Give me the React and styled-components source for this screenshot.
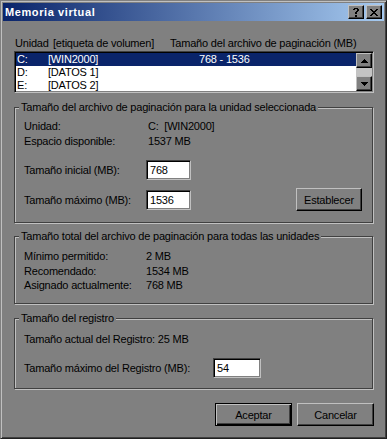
import React from 'react';
import styled, { createGlobalStyle } from 'styled-components';

const GlobalStyle = createGlobalStyle`
  html, body {
    margin: 0;
    padding: 0;
    background: #808080;
  }
  body {
    font-family: 'Liberation Sans', Arial, sans-serif;
    font-size: 11px;
    letter-spacing: -0.2px;
    color: #000000;
  }
`;

const drives = [
  { letter: 'C:', label: '[WIN2000]', size: '768 - 1536', selected: true },
  { letter: 'D:', label: '[DATOS 1]', size: '' },
  { letter: 'E:', label: '[DATOS 2]', size: '' },
];

const totals = [
  { label: 'Mínimo permitido:', value: '2 MB' },
  { label: 'Recomendado:', value: '1534 MB' },
  { label: 'Asignado actualmente:', value: '768 MB' },
];

const helpGlyph = [
  '.XXXX.',
  'XX..XX',
  '....XX',
  '...XX.',
  '..XX..',
  '..XX..',
  '......',
  '..XX..',
  '..XX..',
];

const closeGlyph = [
  'XX....XX',
  '.XX..XX.',
  '..XXXX..',
  '...XX...',
  '..XXXX..',
  '.XX..XX.',
  'XX....XX',
];

const upGlyph = ['...X...', '..XXX..', '.XXXXX.', 'XXXXXXX'];
const downGlyph = ['XXXXXXX', '.XXXXX.', '..XXX..', '...X...'];

const PixelGlyph = ({ rows }) => (
  <svg
    width={rows[0].length}
    height={rows.length}
    viewBox={`0 0 ${rows[0].length} ${rows.length}`}
    shapeRendering="crispEdges"
  >
    {rows.map((row, y) =>
      row.split('').map((c, x) =>
        c === 'X' ? <rect key={`${x}-${y}`} x={x} y={y} width="1" height="1" fill="#000" /> : null
      )
    )}
  </svg>
);

const App = () => {
  return (
    <>
      <GlobalStyle />
      <Window>
        <TitleBar>
          <TitleText>Memoria virtual</TitleText>
          <CaptionButtons>
            <CaptionButton aria-label="Ayuda">
              <PixelGlyph rows={helpGlyph} />
            </CaptionButton>
            <CaptionButton aria-label="Cerrar">
              <PixelGlyph rows={closeGlyph} />
            </CaptionButton>
          </CaptionButtons>
        </TitleBar>

        <Body>
          <ColumnHeader>
            <Col width={38}>Unidad</Col>
            <Col width={117}>[etiqueta de volumen]</Col>
            <Col>Tamaño del archivo de paginación (MB)</Col>
          </ColumnHeader>

          <ListBox>
            <ListRows>
              {drives.map(d => (
                <ListRow key={d.letter} selected={d.selected}>
                  <Cell width={31}>{d.letter}</Cell>
                  <Cell width={151}>{d.label}</Cell>
                  <Cell>{d.size}</Cell>
                </ListRow>
              ))}
            </ListRows>
            <ScrollBar>
              <ScrollButton>
                <PixelGlyph rows={upGlyph} />
              </ScrollButton>
              <ScrollTrack />
              <ScrollButton>
                <PixelGlyph rows={downGlyph} />
              </ScrollButton>
            </ScrollBar>
          </ListBox>

          <GroupBox top={8}>
            <GroupTitle>Tamaño del archivo de paginación para la unidad seleccionada</GroupTitle>
            <GroupContent pt={5} pb={11}>
              <InfoRow>
                <InfoLabel width={124}>Unidad:</InfoLabel>
                <InfoValue>C:  [WIN2000]</InfoValue>
              </InfoRow>
              <InfoRow>
                <InfoLabel width={124}>Espacio disponible:</InfoLabel>
                <InfoValue>1537 MB</InfoValue>
              </InfoRow>
              <FieldRow gap={12}>
                <FieldLabel width={122}>Tamaño inicial (MB):</FieldLabel>
                <TextInput width={45} defaultValue="768" />
              </FieldRow>
              <FieldRow gap={8}>
                <FieldLabel width={122}>Tamaño máximo (MB):</FieldLabel>
                <TextInput width={45} defaultValue="1536" />
                <PushButton width={66} push>Establecer</PushButton>
              </FieldRow>
            </GroupContent>
          </GroupBox>

          <GroupBox top={7}>
            <GroupTitle>Tamaño total del archivo de paginación para todas las unidades</GroupTitle>
            <GroupContent pt={6} pb={10}>
              {totals.map(t => (
                <InfoRow key={t.label}>
                  <InfoLabel width={122}>{t.label}</InfoLabel>
                  <InfoValue>{t.value}</InfoValue>
                </InfoRow>
              ))}
            </GroupContent>
          </GroupBox>

          <GroupBox top={8}>
            <GroupTitle>Tamaño del registro</GroupTitle>
            <GroupContent pt={7} pb={10}>
              <InfoRow>
                <InfoLabel>Tamaño actual del Registro: 25 MB</InfoLabel>
              </InfoRow>
              <FieldRow gap={12}>
                <FieldLabel width={189}>Tamaño máximo del Registro (MB):</FieldLabel>
                <TextInput width={48} defaultValue="54" />
              </FieldRow>
            </GroupContent>
          </GroupBox>

          <ButtonRow>
            <PushButton width={77} isDefault>Aceptar</PushButton>
            <PushButton width={77}>Cancelar</PushButton>
          </ButtonRow>
        </Body>
      </Window>
    </>
  );
};

const Window = styled.div`
  width: 387px;
  height: 439px;
  box-sizing: border-box;
  display: flex;
  flex-direction: column;
  padding: 2px;
  background: #808080;
  border: 1px solid;
  border-color: #808080 #202020 #202020 #808080;
  box-shadow: inset 1px 1px 0 #c0c0c0, inset -1px -1px 0 #404040;
`;

const TitleBar = styled.div`
  height: 18px;
  display: flex;
  align-items: center;
  padding: 0 2px;
  background: linear-gradient(90deg, #0a246a 0%, #a6caf0 100%);
`;

const TitleText = styled.span`
  color: #ffffff;
  font-weight: bold;
  font-size: 11px;
  letter-spacing: 0.6px;
`;

const CaptionButtons = styled.div`
  margin-left: auto;
  display: flex;
  gap: 2px;
`;

const CaptionButton = styled.div`
  width: 16px;
  height: 14px;
  box-sizing: border-box;
  display: flex;
  align-items: center;
  justify-content: center;
  background: #808080;
  border: 1px solid;
  border-color: #c0c0c0 #000000 #000000 #c0c0c0;
  box-shadow: inset -1px -1px 0 #404040;
`;

const Body = styled.div`
  flex: 1;
  display: flex;
  flex-direction: column;
  padding: 16px 10px 0 11px;
`;

const ColumnHeader = styled.div`
  display: flex;
  padding-left: 1px;
  line-height: 13px;
  height: 13px;
  margin-bottom: 1px;
  white-space: nowrap;
`;

const Col = styled.span`
  flex: ${p => (p.width ? `0 0 ${p.width}px` : '1')};
`;

const ListBox = styled.div`
  height: 42px;
  box-sizing: border-box;
  display: flex;
  padding: 1px;
  background: #ffffff;
  border: 1px solid;
  border-color: #404040 #c0c0c0 #c0c0c0 #404040;
  box-shadow: inset 1px 1px 0 #000000, inset -1px -1px 0 #808080;
  overflow: hidden;
`;

const ListRows = styled.div`
  flex: 1;
  overflow: hidden;
`;

const ListRow = styled.div`
  display: flex;
  height: 13px;
  line-height: 13px;
  padding-left: 1px;
  white-space: nowrap;
  background: ${p => (p.selected ? '#0a246a' : 'transparent')};
  color: ${p => (p.selected ? '#ffffff' : '#000000')};
`;

const Cell = styled.span`
  flex: ${p => (p.width ? `0 0 ${p.width}px` : '1')};
`;

const ScrollBar = styled.div`
  width: 16px;
  display: flex;
  flex-direction: column;
`;

const ScrollButton = styled.div`
  height: 15px;
  box-sizing: border-box;
  display: flex;
  align-items: center;
  justify-content: center;
  background: #808080;
  border: 1px solid;
  border-color: #c0c0c0 #000000 #000000 #c0c0c0;
  box-shadow: inset -1px -1px 0 #404040;
`;

const ScrollTrack = styled.div`
  flex: 1;
  background: #c4c4c4;
`;

const GroupBox = styled.fieldset`
  margin: ${p => p.top}px 1px 0 0;
  padding: 0;
  min-width: 0;
  border: 1px solid #404040;
  box-shadow: 1px 1px 0 #c0c0c0, inset 1px 1px 0 #c0c0c0;
`;

const GroupTitle = styled.legend`
  margin-left: 4px;
  padding: 0 2px;
  line-height: 13px;
  background: #808080;
  white-space: nowrap;
`;

const GroupContent = styled.div`
  display: flex;
  flex-direction: column;
  padding: ${p => p.pt}px 10px ${p => p.pb}px 9px;
`;

const InfoRow = styled.div`
  display: flex;
  line-height: 14.5px;
  height: 14.5px;
  white-space: pre;
`;

const InfoLabel = styled.span`
  flex: ${p => (p.width ? `0 0 ${p.width}px` : '1')};
`;

const InfoValue = styled.span`
  flex: 1;
`;

const FieldRow = styled.div`
  display: flex;
  align-items: center;
  margin-top: ${p => p.gap}px;
  white-space: nowrap;
`;

const FieldLabel = styled.label`
  flex: 0 0 ${p => p.width}px;
`;

const TextInput = styled.input`
  width: ${p => p.width}px;
  height: 20px;
  box-sizing: border-box;
  padding: 0 0 0 3px;
  font: inherit;
  letter-spacing: inherit;
  color: #000000;
  background: #ffffff;
  border: 1px solid;
  border-color: #404040 #c0c0c0 #c0c0c0 #404040;
  box-shadow: inset 1px 1px 0 #000000, inset -1px -1px 0 #808080;
  outline: none;
`;

const PushButton = styled.button`
  width: ${p => p.width}px;
  height: 23px;
  box-sizing: border-box;
  margin-left: ${p => (p.push ? 'auto' : '0')};
  padding: 0;
  font: inherit;
  letter-spacing: inherit;
  color: #000000;
  background: #808080;
  border: 1px solid;
  border-color: ${p => (p.isDefault ? '#000000' : '#c0c0c0 #000000 #000000 #c0c0c0')};
  box-shadow: ${p =>
    p.isDefault
      ? 'inset 1px 1px 0 #c0c0c0, inset -1px -1px 0 #000000, inset -2px -2px 0 #404040'
      : 'inset -1px -1px 0 #404040'};
`;

const ButtonRow = styled.div`
  display: flex;
  justify-content: flex-end;
  gap: 5px;
  margin-top: 14px;
`;

export default App;
